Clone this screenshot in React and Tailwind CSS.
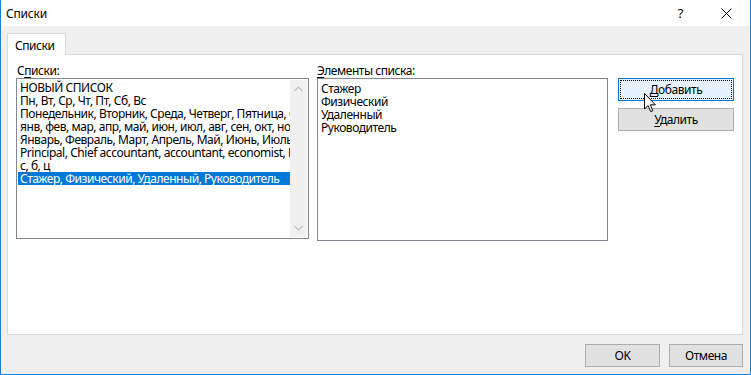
import React from 'react';

const lists = [
  'НОВЫЙ СПИСОК',
  'Пн, Вт, Ср, Чт, Пт, Сб, Вс',
  'Понедельник, Вторник, Среда, Четверг, Пятница, Суббота, Воскресенье',
  'янв, фев, мар, апр, май, июн, июл, авг, сен, окт, ноя, дек',
  'Январь, Февраль, Март, Апрель, Май, Июнь, Июль, Август, Сентябрь, Октябрь, Ноябрь, Декабрь',
  'Principal, Chief accountant, accountant, economist, HR manager',
  'с, б, ц',
  'Стажер, Физический, Удаленный, Руководитель',
];

const items = ['Стажер', 'Физический', 'Удаленный', 'Руководитель'];

function Chevron({ up }) {
  return (
    <svg width="9" height="6" viewBox="0 0 9 6" className="block">
      <path
        d={up ? 'M0.5 5 L4.5 1 L8.5 5' : 'M0.5 1 L4.5 5 L8.5 1'}
        fill="none"
        stroke="#c2c2c2"
        strokeWidth="1.2"
      />
    </svg>
  );
}

function Cursor() {
  return (
    <svg
      width="13"
      height="20"
      viewBox="0 0 13 20"
      className="absolute left-[643px] top-[93px] pointer-events-none"
    >
      <path
        d="M0.5 0.5 L0.5 16 L4.2 12.6 L6.6 18.6 L8.8 17.7 L6.4 11.8 L11.4 11.8 Z"
        fill="#fff"
        stroke="#000"
        strokeWidth="1"
        strokeLinejoin="miter"
      />
    </svg>
  );
}

export default function App() {
  return (
    <div className="relative w-[751px] h-[375px] bg-[#f0f0f0] border-x border-b border-[#1a82d6] flex flex-col font-['Noto_Sans','Open_Sans',sans-serif] text-[12px] leading-[13px] tracking-[-0.45px] text-black overflow-hidden">
      {/* title bar */}
      <div className="h-[26px] bg-white flex items-center pl-[5px] shrink-0">
        <span className="tracking-[-0.2px]">Списки</span>
        <span className="ml-auto mr-[38px] text-[13px]">?</span>
        <svg width="11" height="11" viewBox="0 0 11 11" className="mr-[18px]">
          <path d="M0.5 0.5 L10.5 10.5 M10.5 0.5 L0.5 10.5" stroke="#000" strokeWidth="1" />
        </svg>
      </div>

      <div className="pl-[6px] pr-[7px] pt-[7px]">
        {/* tab */}
        <div className="relative z-10 -mb-px w-[59px] h-[22px] bg-white border-x border-t border-[#d9d9d9] flex items-center pl-[7px] pt-px">
          Списки
        </div>
        {/* panel */}
        <div className="h-[281px] bg-white border border-[#d9d9d9] pt-[9px] pl-[8px] flex">
          {/* left column */}
          <div className="flex flex-col">
            <div className="h-[14px] pl-px">
              С<u className="underline-offset-2">п</u>иски:
            </div>
            <div className="w-[293px] h-[161px] border border-[#828790] p-px flex">
              <div className="flex-1 overflow-hidden pt-px">
                {lists.map((l, i) => (
                  <div
                    key={i}
                    className={`h-[13px] pl-[2px] whitespace-nowrap ${
                      i === lists.length - 1 ? 'bg-[#0078d7] text-white' : ''
                    }`}
                  >
                    {l}
                  </div>
                ))}
              </div>
              <div className="w-[17px] bg-[#f0f0f0] flex flex-col items-center justify-between py-[6px]">
                <Chevron up />
                <Chevron />
              </div>
            </div>
          </div>

          {/* middle column */}
          <div className="flex flex-col ml-[8px]">
            <div className="h-[14px]">
              <u className="underline-offset-2">Э</u>лементы списка:
            </div>
            <div className="w-[291px] h-[163px] border border-[#828790] pt-[3px] pl-[3px]">
              {items.map((it) => (
                <div key={it} className="h-[13px] whitespace-nowrap">
                  {it}
                </div>
              ))}
            </div>
          </div>

          {/* buttons */}
          <div className="flex flex-col ml-[10px] pt-[14px] gap-[7px]">
            <button className="w-[116px] h-[23px] border border-[#0078d7] bg-[#e5f1fb] p-px">
              <div className="w-full h-full border border-dotted border-black flex items-center justify-center">
                <span>
                  <u className="underline-offset-2">Д</u>обавить
                </span>
              </div>
            </button>
            <button className="w-[116px] h-[23px] border border-[#adadad] bg-[#e1e1e1] flex items-center justify-center">
              <span>
                <u className="underline-offset-2">У</u>далить
              </span>
            </button>
          </div>
        </div>

        {/* footer */}
        <div className="flex justify-end gap-[9px] mt-[9px]">
          <button className="w-[75px] h-[23px] border border-[#adadad] bg-[#e1e1e1] flex items-center justify-center">
            OK
          </button>
          <button className="w-[74px] h-[23px] border border-[#adadad] bg-[#e1e1e1] flex items-center justify-center">
            Отмена
          </button>
        </div>
      </div>

      <Cursor />
    </div>
  );
}
